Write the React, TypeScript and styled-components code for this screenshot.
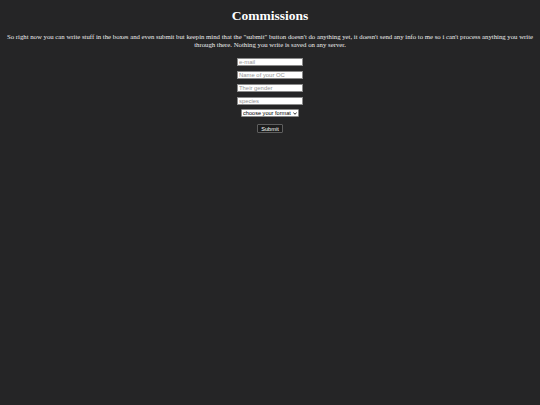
import React from "react";
import styled, {createGlobalStyle} from "styled-components";

const Global = createGlobalStyle`
    html, body{
        margin: 0;
        padding: 0;
        background: #252526;
        min-height: 100%;
    }
    body{
        font-family: "Liberation Serif", "Times New Roman", serif;
        color: #ffffff;
    }
`

const Page = styled.div`
    min-height: 405px;
    display: flex;
    flex-direction: column;
    align-items: center;
    padding: 8px 6px 0 6px;
    box-sizing: border-box;
`

const Title = styled.h1`
    margin: 0;
    font-size: 13.5px;
    font-weight: bold;
    line-height: 16px;
`

const Intro = styled.p`
    margin: 9px 0 9px 0;
    font-size: 6.75px;
    line-height: 8px;
    text-align: center;
    color: #ececec;
`

const Form = styled.form`
    display: flex;
    flex-direction: column;
    align-items: center;
    gap: 5px;
`

const Field = styled.input`
    width: 66px;
    height: 8px;
    box-sizing: border-box;
    padding: 0 1px;
    border: 1px solid #8a8a8a;
    background: #ffffff;
    font-family: "Liberation Sans", Arial, sans-serif;
    font-size: 5.9px;
    line-height: 6px;
    outline: none;
    &::placeholder{
        color: #959595;
        line-height: 6px;
    }
`

const SelectWrap = styled.span`
    position: relative;
    display: inline-flex;
    margin-top: -1px;
`

const Select = styled.select`
    appearance: none;
    width: 58px;
    height: 8px;
    box-sizing: border-box;
    padding: 0 6px 0 1px;
    border: 1px solid #8a8a8a;
    border-radius: 1px;
    background: #ffffff;
    color: #000;
    font-family: "Liberation Sans", Arial, sans-serif;
    font-size: 5.6px;
    line-height: 6px;
    outline: none;
`

const Chevron = styled.svg`
    position: absolute;
    right: 2px;
    top: 3px;
    width: 4px;
    height: 3px;
    pointer-events: none;
`

const Submit = styled.button`
    margin-top: 2px;
    height: 9px;
    padding: 0 3px;
    box-sizing: border-box;
    border: 1px solid #5e5e5e;
    border-radius: 1px;
    background: #1c1c1c;
    color: #ffffff;
    font-family: "Liberation Sans", Arial, sans-serif;
    font-size: 5.6px;
    line-height: 6px;
`

export default function App(){
    return (
        <>
            <Global/>
            <Page>
                <Title>Commissions</Title>
                <Intro>
                    So right now you can write stuff in the boxes and even submit but keepin mind that the "submit" button doesn't do anything yet, it doesn't send any info to me so i can't process anything you write through there. Nothing you write is saved on any server.
                </Intro>
                <Form onSubmit={e => e.preventDefault()}>
                    <Field type="email" placeholder="e-mail"/>
                    <Field type="text" placeholder="Name of your OC"/>
                    <Field type="text" placeholder="Their gender"/>
                    <Field type="text" placeholder="species"/>
                    <SelectWrap>
                        <Select defaultValue="">
                            <option value="">choose your format</option>
                            <option value="sketch">sketch</option>
                            <option value="lineart">lineart</option>
                            <option value="colored">colored</option>
                        </Select>
                        <Chevron viewBox="0 0 4 3">
                            <path d="M0.4 0.5 L2 2.3 L3.6 0.5" fill="none" stroke="#000" strokeWidth="0.8"/>
                        </Chevron>
                    </SelectWrap>
                    <Submit type="submit">Submit</Submit>
                </Form>
            </Page>
        </>
    )
}
